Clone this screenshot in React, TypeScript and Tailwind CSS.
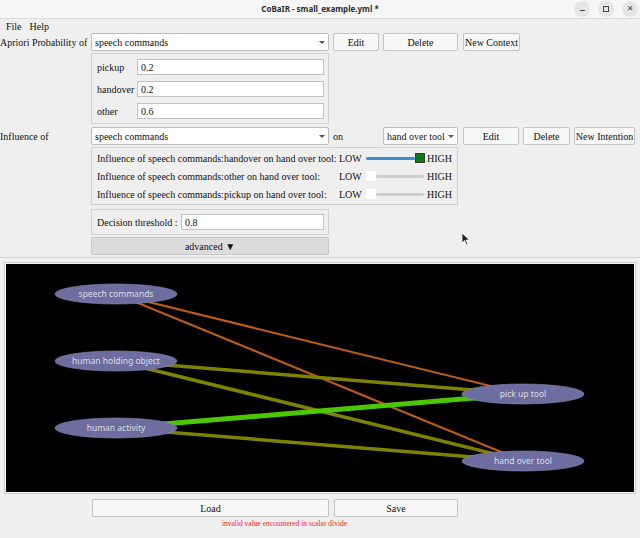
import React from "react";

const serif = "font-['Liberation_Serif',serif]";

function Combo({ value, className }: { value: string; className: string }) {
  return (
    <div className={`relative flex h-[18px] items-center rounded-[2px] border border-[#bdbdbd] bg-white pl-[3px] ${className}`}>
      <span className="text-[10px] text-[#111]">{value}</span>
      <span className="absolute right-[3px] top-[7px] h-0 w-0 border-x-[3px] border-t-[3px] border-x-transparent border-t-[#555]" />
    </div>
  );
}

function Btn({ label, className }: { label: string; className: string }) {
  return (
    <div className={`flex h-[18px] items-center justify-center rounded-[2px] border border-[#c4c4c4] bg-[#f7f7f7] text-[10px] text-[#111] ${className}`}>
      {label}
    </div>
  );
}

function Entry({ value, className }: { value: string; className: string }) {
  return (
    <div className={`flex h-[16px] items-center border border-[#c2c2c2] bg-white pl-[3px] text-[10px] text-[#111] ${className}`}>
      {value}
    </div>
  );
}

function Slider({ on }: { on: boolean }) {
  if (on) {
    return (
      <div className="flex w-[59px] items-center">
        <div className="h-[3px] w-[49px] rounded-full bg-[#3d8fd1]" />
        <div className="h-[10px] w-[10px] border border-[#3a3a3a] bg-[#0a7d10]" />
      </div>
    );
  }
  return (
    <div className="flex w-[59px] items-center">
      <div className="h-[10px] w-[10px] bg-white" />
      <div className="h-[3px] w-[48px] rounded-full bg-[#cdcdcd]" />
    </div>
  );
}

const infl = [
  { text: "Influence of speech commands:handover on hand over tool:", on: true },
  { text: "Influence of speech commands:other on hand over tool:", on: false },
  { text: "Influence of speech commands:pickup on hand over tool:", on: false },
];

const nodes = [
  { label: "speech commands", x: 116, y: 294 },
  { label: "human holding object", x: 116, y: 361 },
  { label: "human activity", x: 116, y: 428 },
  { label: "pick up tool", x: 523, y: 394 },
  { label: "hand over tool", x: 523, y: 461 },
];

const edges = [
  { a: 0, b: 3, c: "#c35f0c", w: 2 },
  { a: 0, b: 4, c: "#c35f0c", w: 2 },
  { a: 1, b: 3, c: "#7f8200", w: 3.5 },
  { a: 1, b: 4, c: "#7f8200", w: 3.5 },
  { a: 2, b: 4, c: "#7f8200", w: 3.5 },
  { a: 2, b: 3, c: "#4cc800", w: 5 },
];

export default function App() {
  return (
    <div className={`relative h-[538px] w-[640px] overflow-hidden bg-[#efefef] ${serif}`}>
      {/* title bar */}
      <div className="relative flex h-[19px] items-center justify-center border-b border-[#dcdcdc] bg-[#f6f6f6]">
        <span className="font-['Noto_Sans',sans-serif] text-[8px] font-bold text-[#2e2e2e]">CoBaIR - small_example.yml *</span>
        <div className="absolute right-[2px] top-[1px] flex gap-[8px]">
          <div className="flex h-[16px] w-[16px] items-center justify-center rounded-full bg-[#e6e6e6]">
            <div className="mt-[3px] h-[1px] w-[5px] bg-[#444]" />
          </div>
          <div className="flex h-[16px] w-[16px] items-center justify-center rounded-full bg-[#e6e6e6]">
            <div className="h-[6px] w-[6px] border border-[#444]" />
          </div>
          <div className="flex h-[16px] w-[16px] items-center justify-center rounded-full bg-[#e6e6e6] font-['DejaVu_Sans',sans-serif] text-[8px] text-[#444]">
            ✕
          </div>
        </div>
      </div>

      {/* menu */}
      <div className="flex h-[14px] items-center gap-[8px] pl-[6px] text-[10px] text-[#111]">
        <span>File</span>
        <span>Help</span>
      </div>

      {/* apriori row */}
      <div className="flex items-center">
        <span className="w-[91px] text-[10px] text-[#111]">Apriori Probability of</span>
        <Combo value="speech commands" className="w-[238px]" />
        <Btn label="Edit" className="ml-[4px] w-[46px]" />
        <Btn label="Delete" className="ml-[4px] w-[75px]" />
        <Btn label="New Context" className="ml-[5px] w-[57px]" />
      </div>

      <div className="ml-[91px] mt-[2px] flex h-[71px] w-[238px] flex-col gap-[6px] border border-[#d2d2d2] pl-[5px] pt-[5px] text-[10px] text-[#111]">
        {[
          ["pickup", "0.2"],
          ["handover", "0.2"],
          ["other", "0.6"],
        ].map(([k, v]) => (
          <div key={k} className="flex items-center">
            <span className="w-[40px]">{k}</span>
            <Entry value={v} className="w-[187px]" />
          </div>
        ))}
      </div>

      {/* influence row */}
      <div className="mt-[3px] flex items-center">
        <span className="w-[91px] text-[10px] text-[#111]">Influence of</span>
        <Combo value="speech commands" className="w-[238px]" />
        <span className="ml-[4px] w-[50px] text-[10px] text-[#111]">on</span>
        <Combo value="hand over tool" className="w-[75px]" />
        <Btn label="Edit" className="ml-[5px] w-[56px]" />
        <Btn label="Delete" className="ml-[4px] w-[47px]" />
        <Btn label="New Intention" className="ml-[4px] w-[61px]" />
      </div>

      <div className="ml-[91px] mt-[2px] flex h-[58px] w-[367px] flex-col border border-[#d2d2d2] pl-[5px] pt-[1px] text-[10px] text-[#111]">
        {infl.map((r) => (
          <div key={r.text} className="flex h-[18px] items-center">
            <span className="w-[242px] whitespace-nowrap">{r.text}</span>
            <span className="w-[27px]">LOW</span>
            <Slider on={r.on} />
            <span className="ml-[2px]">HIGH</span>
          </div>
        ))}
      </div>

      <div className="ml-[91px] mt-[4px] flex h-[26px] w-[238px] items-center border border-[#d2d2d2] pl-[5px] text-[10px] text-[#111]">
        <span className="w-[84px]">Decision threshold :</span>
        <Entry value="0.8" className="w-[143px]" />
      </div>

      <div className="ml-[91px] mt-[2px] flex h-[18px] w-[238px] items-center justify-center rounded-[2px] border border-[#c8c8c8] bg-[#dcdcdc] text-[10px] text-[#111]">
        advanced ▼
      </div>

      <div className="mt-[2px] h-[1px] bg-[#d6d6d6]" />

      {/* graph */}
      <div className="ml-[4px] mt-[4px] h-[232px] w-[632px] border border-[#cfcfcf] bg-[#f4f4f4] p-[1px]">
        <svg className="block bg-black" width={628} height={228} viewBox="6 264 628 228">
          {edges.map((e, i) => (
            <line
              key={i}
              x1={nodes[e.a].x}
              y1={nodes[e.a].y}
              x2={nodes[e.b].x}
              y2={nodes[e.b].y}
              stroke={e.c}
              strokeWidth={e.w}
            />
          ))}
          {nodes.map((n) => (
            <g key={n.label}>
              <ellipse cx={n.x} cy={n.y} rx={61} ry={10} fill="#6d6e9f" stroke="#8a8ab8" strokeWidth={0.6} />
              <text
                x={n.x}
                y={n.y + 3}
                textAnchor="middle"
                fontSize={8.5}
                fill="#dcdce8"
                fontFamily="'Noto Sans', sans-serif"
              >
                {n.label}
              </text>
            </g>
          ))}
        </svg>
      </div>

      {/* bottom */}
      <div className="mt-[5px] flex">
        <Btn label="Load" className="ml-[92px] h-[17px] w-[237px]" />
        <Btn label="Save" className="ml-[5px] h-[17px] w-[124px]" />
      </div>
      <div className="mt-[1px] w-[569px] text-center text-[7.5px] text-[#ee2a2a]">invalid value encountered in scalar divide</div>

      {/* mouse pointer */}
      <svg className="absolute left-[461px] top-[232px]" width="10" height="14" viewBox="0 0 10 14">
        <path d="M1 1 L1 11 L3.5 8.5 L5.5 13 L7 12.3 L5 8 L8.5 8 Z" fill="#222" stroke="#fff" strokeWidth="0.8" />
      </svg>
    </div>
  );
}
